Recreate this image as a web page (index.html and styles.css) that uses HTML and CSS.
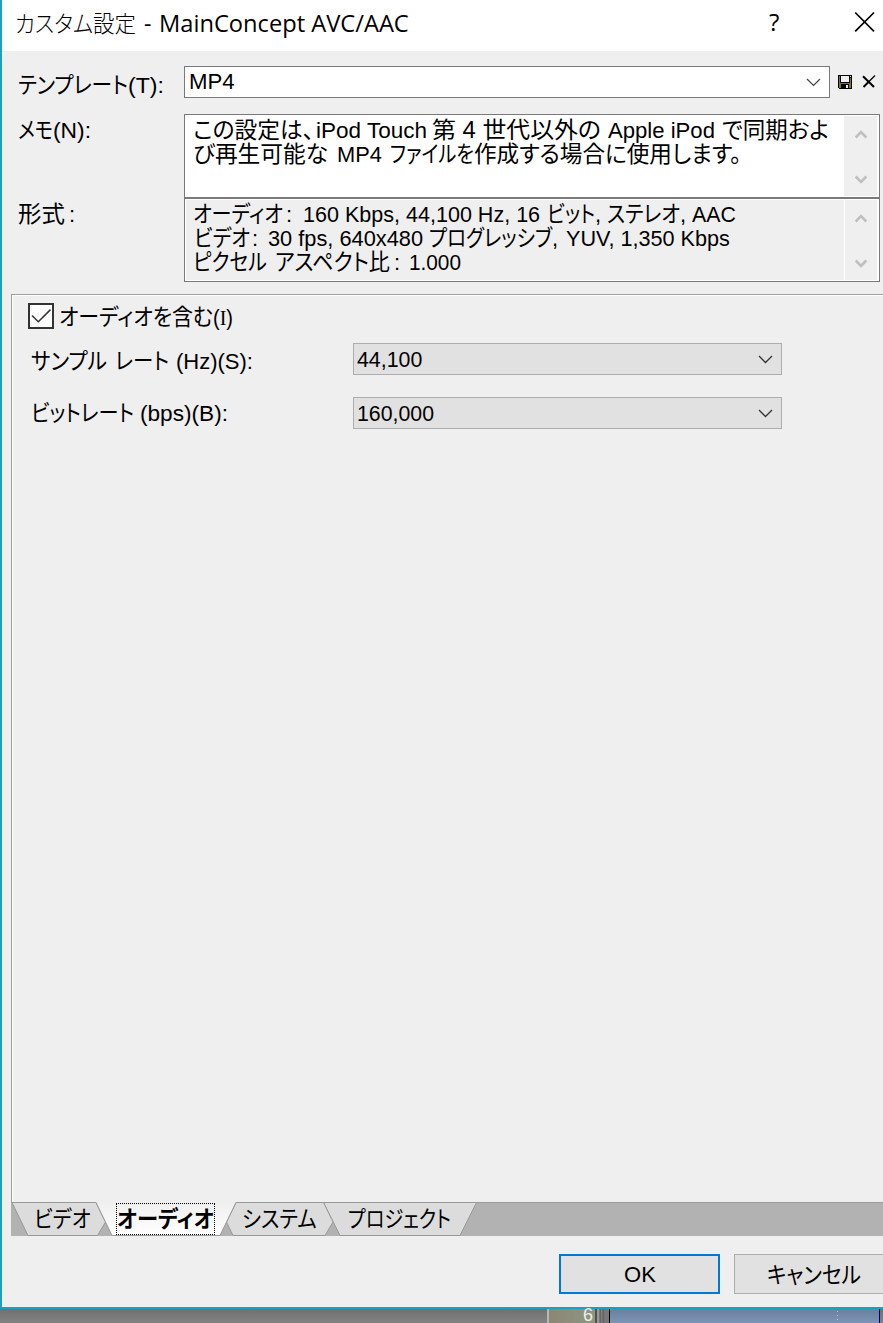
FILE: index.html
```html
<!DOCTYPE html>
<html lang="ja">
<head>
<meta charset="utf-8">
<title>カスタム設定 - MainConcept AVC/AAC</title>
<link rel="stylesheet" href="styles.css">
</head>
<body>
<div class="window">
  <header class="titlebar">
    <h1 class="line title"><span class="run light t-ja">カスタム設定</span><span class="run t-dash">-</span><span class="run t-en">MainConcept AVC/AAC</span></h1>
    <span class="help">?</span>
    <svg class="close" width="22" height="22" viewBox="0 0 22 22"><path d="M1.2 1.5 20 20.3M20 1.5 1.2 20.3" fill="none" stroke="#000" stroke-width="1.7"/></svg>
  </header>

  <section class="form">
    <div class="row template-row">
      <label class="line label lb-template"><span class="run ja l1a">テンプレート</span><span class="run l1b">(T):</span></label>
      <div class="combo template-combo">
        <span class="line"><span class="run v-mp4">MP4</span></span>
        <svg class="chev" width="15" height="9" viewBox="0 0 15 9"><path d="M1 1l6.500 6.500L14 1" fill="none" stroke="#444" stroke-width="1.2"/></svg>
      </div>
      <svg class="save" width="14" height="14" viewBox="0 0 14 14" shape-rendering="crispEdges"><path d="M0 0h14v14H1L0 13z" fill="#000"/><path d="M1 1h1v7h10V3h1v10h-2V9H3v4H1z" fill="#808000"/><path d="M3 1h8v6H3zM12 1h1v1h-1zM8 10h2v3H8z" fill="#efefef"/></svg>
      <svg class="del" width="14" height="14" viewBox="0 0 14 14"><path d="M1 1.200 12 12" fill="none" stroke="#000" stroke-width="2"/><path d="M13 .5 7 6.500" fill="none" stroke="#000" stroke-width="1.200"/><path d="M7 6.500 1.500 12" fill="none" stroke="#000" stroke-width="2"/></svg>
    </div>
    <div class="row memo-row">
      <label class="line label lb-memo"><span class="run ja l2a">メモ</span><span class="run l2b">(N):</span></label>
      <div class="box memo">
        <div class="lines">
          <div class="line"><span class="run ja m1">この設定は、</span><span class="run m2">iPod Touch</span><span class="run ja m3">第 4 世代以外の</span><span class="run m4">Apple iPod</span><span class="run ja m5">で同期およ</span></div>
          <div class="line"><span class="run ja m6">び再生可能な</span><span class="run m7">MP4</span><span class="run ja m8">ファイルを</span><span class="run ja m9">作成する場合に使用します。</span></div>
        </div>
        <div class="scroll"><svg width="12" height="9" viewBox="0 0 12 9"><path d="M.7 7.500 6 2.200l5.300 5.300" fill="none" stroke="#bfbfbf" stroke-width="2.600"/></svg><svg width="12" height="9" viewBox="0 0 12 9"><path d="M.7 1.500 6 6.800l5.300-5.300" fill="none" stroke="#bfbfbf" stroke-width="2.600"/></svg></div>
      </div>
    </div>
    <div class="row format-row">
      <label class="line label lb-format"><span class="run ja l3a">形式</span><span class="run l3b">:</span></label>
      <div class="box format">
        <div class="lines">
          <div class="line"><span class="run ja f1">オーディオ</span><span class="run f1c">:</span><span class="run f2">160 Kbps, 44,100 Hz, 16</span><span class="run ja f3">ビット</span><span class="run f3c">,</span><span class="run ja f4">ステレオ</span><span class="run f4c">,</span><span class="run f5">AAC</span></div>
          <div class="line"><span class="run ja f6">ビデオ</span><span class="run f6c">:</span><span class="run f7">30 fps, 640x480</span><span class="run ja f8">プログレッシブ</span><span class="run f8c">,</span><span class="run f9">YUV, 1,350 Kbps</span></div>
          <div class="line"><span class="run ja f10">ピクセル</span><span class="run ja f11">アスペクト比</span><span class="run f11c">:</span><span class="run f12">1.000</span></div>
        </div>
        <div class="scroll"><svg width="12" height="9" viewBox="0 0 12 9"><path d="M.7 7.500 6 2.200l5.300 5.300" fill="none" stroke="#bfbfbf" stroke-width="2.600"/></svg><svg width="12" height="9" viewBox="0 0 12 9"><path d="M.7 1.500 6 6.800l5.300-5.300" fill="none" stroke="#bfbfbf" stroke-width="2.600"/></svg></div>
      </div>
    </div>
  </section>

  <main class="panel">
    <label class="check-row">
      <span class="checkbox"><svg width="22" height="22" viewBox="0 0 22 22"><path d="M2 10.500 8.300 16.800 20.500 4.600" fill="none" stroke="#333" stroke-width="1.500"/></svg></span>
      <span class="line"><span class="run ja c1">オーディオを含む</span><span class="run c2">(<span class="serif">I</span>)</span></span>
    </label>
    <div class="field field-rate">
      <label class="line label"><span class="run ja s1">サンプル</span><span class="run ja s2">レート</span><span class="run s3">(Hz)(S):</span></label>
      <div class="combo gray"><span class="line"><span class="run v-rate">44,100</span></span><svg class="chev" width="15" height="9" viewBox="0 0 15 9"><path d="M1 1l6.500 6.500L14 1" fill="none" stroke="#333" stroke-width="1.300"/></svg></div>
    </div>
    <div class="field field-bit">
      <label class="line label"><span class="run ja b1">ビットレート</span><span class="run b2">(bps)(B):</span></label>
      <div class="combo gray"><span class="line"><span class="run v-bit">160,000</span></span><svg class="chev" width="15" height="9" viewBox="0 0 15 9"><path d="M1 1l6.500 6.500L14 1" fill="none" stroke="#333" stroke-width="1.300"/></svg></div>
    </div>
  </main>

  <nav class="tabs">
    <svg class="tab-shapes" width="872" height="34" viewBox="0 0 872 34">
      <defs><linearGradient id="sel" x1="0" y1="0" x2="0" y2="1"><stop offset="0" stop-color="#efefef"/><stop offset="1" stop-color="#fff"/></linearGradient></defs>
      <path d="M0 0H872V34H0z" fill="#b2b2b2"/>
      <path d="M0 .5H872" stroke="#999"/>
      <path d="M1 .5H85L94.500 20 86.500 33.500H17z" fill="#dcdcdc" stroke="#999"/>
      <path d="M312.500 .5H465.500L449 33.500H329z" fill="#dcdcdc" stroke="#999"/>
      <path d="M225 .5H312.500L322 20 314 33.500H222L215.500 20z" fill="#dcdcdc" stroke="#999"/>
      <path d="M85 0H225L209 33.500H101z" fill="url(#sel)"/>
      <path d="M85 .5 101 33.500H209L225 .5" fill="none" stroke="#999"/>
    </svg>
    <span class="line tab-text"><span class="run ja tb1">ビデオ</span><span class="focus"><span class="run ja tb2">オーディオ</span></span><span class="run ja tb3">システム</span><span class="run ja tb4">プロジェクト</span></span>
  </nav>

  <footer class="buttons">
    <button class="btn ok"><span class="line"><span class="run ok-t">OK</span></span></button>
    <button class="btn cancel"><span class="line"><span class="run ja cancel-t">キャンセル</span></span></button>
  </footer>
</div>
<div class="behind"><span class="gray-left"></span><span class="ruler">6</span><span class="rail"></span><span class="clip"></span><span class="edge"></span></div>
</body>
</html>
```
FILE: styles.css
```css
* { box-sizing: border-box; }
body { margin: 0; width: 883px; height: 1323px; overflow: hidden; background: #808080; color: #000; font: 22px/24px "Liberation Sans", "Noto Sans CJK JP", sans-serif; }
.window { width: 883px; height: 1309px; border-left: 2px solid #1aa1c2; border-bottom: 2px solid #1aa1c2; background: #efefef; display: flex; flex-direction: column; overflow: hidden; }
.line { display: flex; height: 24px; line-height: 24px; white-space: nowrap; align-items: baseline; }

/* A run is one stretch of text condensed or expanded to its UI width. */
.run { display: block; flex: none; transform-origin: 0 50%; white-space: pre; }
.ja { font-size: 23px; font-feature-settings: "palt"; }

.titlebar { height: 51px; flex: none; background: #fff; display: flex; align-items: flex-start; padding: 11px 0 0 13px; }
.title { margin: 0; width: 752px; font: 400 23px/24px "Open Sans", "Noto Sans CJK JP", sans-serif; }
.light { font-weight: 300; font-feature-settings: "palt"; }
.t-ja { width: 121px; transform: scaleX(.933); }
.t-dash { margin-left: 8px; width: 15px; }
.t-en { width: 249px; transform: scaleX(1.029); }
.help { width: 87px; padding-left: 2px; font: 24px/24px "Open Sans", sans-serif; margin-top: -1px; }

.form { flex: none; height: 243px; padding-top: 15px; }
.row { display: flex; }
.label { flex: none; width: 182px; padding-left: 16px; }
.template-row { height: 48px; }
.lb-template { margin-top: 7px; }
.l1a { width: 110px; transform: scaleX(.899); }
.l1b { width: 37px; transform: scaleX(1.05); }
.combo { border: 1px solid #7a7a7a; background: #fff; height: 32px; display: flex; justify-content: space-between; align-items: center; padding: 0 8px 0 4px; }
.template-combo { width: 646px; }
.v-mp4 { width: 46px; transform: scaleX(1.01); }
.save { margin: 9px 0 0 8px; }
.del { margin: 9px 0 0 10px; }
.memo-row, .format-row { height: 84px; }
.lb-memo { margin-top: 4px; }
.l2a { width: 35px; transform: scaleX(.834); }
.l2b { width: 38px; transform: scaleX(1.037); }
.lb-format { margin-top: 4px; }
.l3a { width: 48px; transform: scaleX(1.02); }
.l3b { width: 6px; margin-left: 3px; }
.box { width: 696px; height: 84px; border: 1px solid #7a7a7a; background: #fff; display: flex; justify-content: space-between; padding: 1px; }
.format { background: #efefef; box-shadow: inset 0 0 0 1px #fff; }
.lines { padding: 2px 0 0 7px; }
.scroll { width: 34px; background: #efefef; display: flex; flex-direction: column; align-items: center; justify-content: space-between; padding: 14px 0 12px; border-right: 1px solid #fff; }
.format .scroll { border-left: 1px solid #fff; }
.m1 { width: 121px; transform: scaleX(.987); }
.m2 { width: 111px; margin-left: 2px; transform: scaleX(1.023); }
.m3 { width: 169px; margin-left: 5px; transform: scaleX(1.038); }
.m4 { width: 107px; margin-left: 7px; transform: scaleX(1.005); }
.m5 { width: 107px; margin-left: 7px; transform: scaleX(.978); }
.m6 { width: 135px; transform: scaleX(.987); }
.m7 { width: 45px; margin-left: 9px; transform: scaleX(.993); }
.m8 { width: 84px; margin-left: 8px; transform: scaleX(.832); }
.m9 { width: 268px; transform: scaleX(.982); }
.f1 { width: 90px; transform: scaleX(.876); }
.f1c { width: 6px; margin-left: 3px; }
.f2 { width: 237px; margin-left: 11px; transform: scaleX(.979); }
.f3 { width: 48px; margin-left: 7px; transform: scaleX(.843); }
.f3c { width: 6px; }
.f4 { width: 73px; margin-left: 6px; transform: scaleX(.879); }
.f4c { width: 6px; }
.f5 { width: 44px; margin-left: 6px; transform: scaleX(.971); }
.f6 { width: 56px; margin-left: 1px; transform: scaleX(.878); }
.f6c { width: 6px; margin-left: 2px; }
.f7 { width: 155px; margin-left: 10px; transform: scaleX(.99); }
.f8 { width: 123px; margin-left: 6px; transform: scaleX(.853); }
.f8c { width: 6px; }
.f9 { width: 164px; margin-left: 8px; transform: scaleX(.983); }
.f10 { width: 74px; transform: scaleX(.865); }
.f11 { width: 115px; margin-left: 8px; transform: scaleX(.918); }
.f11c { width: 6px; margin-left: 4px; }
.f12 { width: 52px; margin-left: 9px; transform: scaleX(.944); }

.panel { flex: none; height: 908px; margin-left: 9px; border: solid #a0a0a0; border-width: 1px 0 0 1px; box-shadow: inset 1px 1px 0 #fff; padding: 8px 0 0 16px; }
.check-row { display: flex; height: 26px; }
.checkbox { width: 26px; height: 26px; border: 2px solid #333; background: #fff; }
.check-row .line { margin: 2px 0 0 5px; }
.c1 { width: 154px; transform: scaleX(.912); }
.c2 { width: 20px; transform: scaleX(.91); }
.serif { font-family: "Liberation Serif", serif; }
.field { display: flex; }
.field .label { width: 325px; padding-left: 3px; margin-top: 6px; }
.field-rate { margin-top: 14px; height: 54px; }
.field-bit .label { margin-top: 4px; }
.s1 { width: 76px; transform: scaleX(.903); }
.s2 { width: 54px; margin-left: 8px; transform: scaleX(.89); }
.s3 { width: 78px; margin-left: 7px; }
.b1 { width: 103px; transform: scaleX(.876); }
.b2 { width: 88px; margin-left: 6px; transform: scaleX(1.028); }
.gray { width: 429px; background: #e1e1e1; border-color: #adadad; padding: 0 8px 0 3px; }
.gray .line, .btn .line { margin-top: 2px; }
.v-rate { width: 66px; transform: scaleX(.97); }
.v-bit { width: 77px; transform: scaleX(.968); }

.tabs { flex: none; height: 34px; margin-left: 9px; position: relative; }
.tab-shapes { position: absolute; left: 0; top: 0; }
.tab-text { position: relative; padding: 5px 0 0 23px; }
.tb1 { width: 57px; transform: scaleX(.885); }
.focus { outline: 1px dotted #000; margin: -3px 0 0 26px; padding-top: 3px; width: 97px; height: 30px; }
.tb2 { width: 97px; font-weight: 700; transform: scaleX(.928); }
.tb3 { width: 75px; margin-left: 28px; transform: scaleX(.89); }
.tb4 { width: 103px; margin-left: 31px; transform: scaleX(.835); }

.buttons { display: flex; padding: 18px 0 0 557px; gap: 14px; }
.btn { flex: none; height: 40px; border: 1px solid #adadad; background: #e1e1e1; font: inherit; color: #000; padding: 0; display: flex; align-items: center; }
.ok { width: 161px; border: 2px solid #0078d7; padding-left: 63px; }
.ok-t { width: 32px; }
.cancel { width: 161px; padding-left: 32px; }
.cancel-t { width: 94px; transform: scaleX(.902); }

.behind { display: flex; height: 14px; background: linear-gradient(#707070, #828282); }
.gray-left { width: 547px; }
.ruler { width: 50px; border-left: 2px solid #b8b8b0; border-right: 2px solid #505050; background: linear-gradient(100deg, #8c8576, #8d9880); color: #eee; font: 18px/12px "Liberation Sans", sans-serif; padding: 0 2px; text-align: right; }
.rail { width: 13px; background: linear-gradient(90deg, #999 2px, #555 3px, #777 4px, #888 5px, #555 6px, #777 7px); border-right: 1px solid #000; }
.clip { width: 270px; background: linear-gradient(90deg, transparent 227px, #b8c4d6 227px, #b8c4d6 228px, transparent 228px) 0 2px / 100% 1px no-repeat, linear-gradient(90deg, transparent 227px, #b8c4d6 227px, #b8c4d6 228px, transparent 228px) 0 6px / 100% 1px no-repeat, linear-gradient(90deg, transparent 227px, #b8c4d6 227px, #b8c4d6 228px, transparent 228px) 0 10px / 100% 1px no-repeat, linear-gradient(#6980a0, #7c94b6); border-right: 1px solid #000080; }
.edge { flex: 1; }
```
